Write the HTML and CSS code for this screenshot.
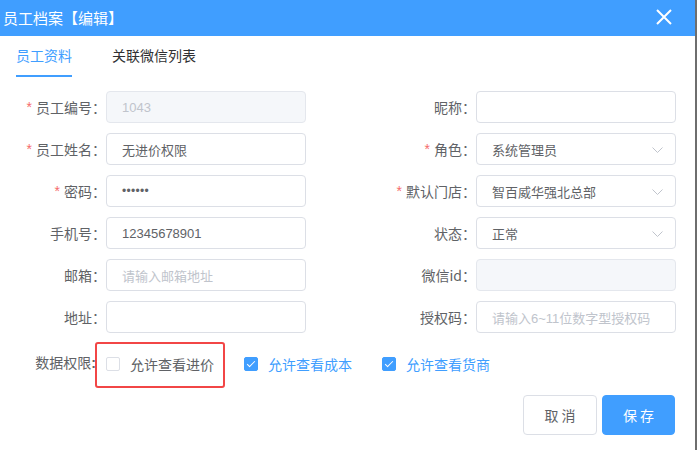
FILE: index.html
```html
<!DOCTYPE html>
<html lang="zh-CN">
<head>
<meta charset="utf-8">
<title>员工档案【编辑】</title>
<link rel="stylesheet" href="styles.css">
</head>
<body>
<div class="dialog">
  <div class="header">
    <span class="title">员工档案【编辑】</span>
    <svg class="close" width="16" height="16" viewBox="0 0 16 16"><path d="M1 1 L15 15 M15 1 L1 15" stroke="#fff" stroke-width="2" fill="none"/></svg>
  </div>
  <div class="tabs">
    <div class="tab active">员工资料</div>
    <div class="tab">关联微信列表</div>
  </div>
  <div class="form">
    <div class="label"><span class="req">*</span>员工编号：</div>
    <div class="input disabled">1043</div>
    <div class="label">昵称：</div>
    <div class="input"></div>

    <div class="label"><span class="req">*</span>员工姓名：</div>
    <div class="input">无进价权限</div>
    <div class="label"><span class="req">*</span>角色：</div>
    <div class="input select">系统管理员<svg class="arrow" width="11" height="6" viewBox="0 0 11 6"><path d="M0.5 0.5 L5.5 5.5 L10.5 0.5" stroke="#c0c4cc" stroke-width="1" fill="none"/></svg></div>

    <div class="label"><span class="req">*</span>密码：</div>
    <div class="input"><span class="dots">••••••</span></div>
    <div class="label"><span class="req">*</span>默认门店：</div>
    <div class="input select">智百威华强北总部<svg class="arrow" width="11" height="6" viewBox="0 0 11 6"><path d="M0.5 0.5 L5.5 5.5 L10.5 0.5" stroke="#c0c4cc" stroke-width="1" fill="none"/></svg></div>

    <div class="label">手机号：</div>
    <div class="input num">12345678901</div>
    <div class="label">状态：</div>
    <div class="input select">正常<svg class="arrow" width="11" height="6" viewBox="0 0 11 6"><path d="M0.5 0.5 L5.5 5.5 L10.5 0.5" stroke="#c0c4cc" stroke-width="1" fill="none"/></svg></div>

    <div class="label">邮箱：</div>
    <div class="input placeholder">请输入邮箱地址</div>
    <div class="label">微信id：</div>
    <div class="input disabled"></div>

    <div class="label">地址：</div>
    <div class="input"></div>
    <div class="label">授权码：</div>
    <div class="input placeholder">请输入6~11位数字型授权码</div>
  </div>
  <div class="perm-row">
    <div class="perm-label">数据权限<span class="colon">:</span></div>
    <div class="checks">
      <label class="check"><span class="box"></span><span class="ctext">允许查看进价</span></label>
      <label class="check checked"><span class="box"></span><span class="ctext">允许查看成本</span></label>
      <label class="check checked"><span class="box"></span><span class="ctext">允许查看货商</span></label>
    </div>
    <div class="highlight"></div>
  </div>
  <div class="footer">
    <button class="btn">取 消</button>
    <button class="btn primary">保 存</button>
  </div>
</div>
</body>
</html>
```

FILE: styles.css
```css
* { box-sizing: border-box; }
html, body { margin: 0; padding: 0; }
body {
  width: 697px;
  height: 450px;
  background: #fff;
  font-family: "Liberation Sans", "Noto Sans CJK SC", sans-serif;
  font-size: 14px;
  color: #606266;
  overflow: hidden;
}
.dialog {
  width: 697px;
  height: 450px;
  border-right: 2px solid #6e6e6e;
  background: #fff;
}
.header {
  height: 36px;
  background: #409eff;
  display: flex;
  align-items: center;
  justify-content: space-between;
  padding: 0 23px 0 3px;
}
.title {
  color: #fff;
  font-size: 15px;
  font-family: "Noto Sans CJK SC", sans-serif;
  line-height: 20px;
}
.close { display: block; margin-top: -3px; }
.tabs {
  height: 41px;
  display: flex;
  gap: 40px;
  padding-left: 16px;
}
.tab {
  height: 41px;
  line-height: 39px;
  font-size: 14px;
  font-family: "Noto Sans CJK SC", sans-serif;
  color: #303133;
  border-bottom: 2px solid transparent;
}
.tab.active {
  color: #409eff;
  border-bottom-color: #409eff;
}
.form {
  margin-top: 14px;
  display: grid;
  grid-template-columns: 106px 200px 170px 200px;
  grid-auto-rows: 32px;
  row-gap: 10px;
}
.label {
  display: flex;
  align-items: center;
  justify-content: flex-end;
  font-family: "Noto Sans CJK SC", sans-serif;
  font-size: 14px;
  color: #606266;
  white-space: nowrap;
}
.req {
  color: #f56c6c;
  margin-right: 4px;
  font-family: "Liberation Sans", sans-serif;
}
.input {
  position: relative;
  border: 1px solid #dcdfe6;
  border-radius: 4px;
  background: #fff;
  padding: 0 15px;
  display: flex;
  align-items: center;
  font-size: 13px;
  color: #606266;
  white-space: nowrap;
}
.input.disabled {
  background: #f5f7fa;
  border-color: #e4e7ed;
  color: #c0c4cc;
}
.input.placeholder { color: #c0c4cc; }
.dots { font-family: "Liberation Sans", sans-serif; font-size: 12px; letter-spacing: 0.3px; }
.arrow {
  position: absolute;
  right: 12px;
  top: 13px;
}
.perm-row {
  position: relative;
  margin-top: 15px;
  height: 32px;
  display: flex;
  align-items: center;
}
.perm-label {
  width: 106px;
  padding-right: 10px;
  text-align: right;
  font-family: "Noto Sans CJK SC", sans-serif;
  font-size: 14px;
  color: #606266;
  margin-top: -5px;
  white-space: nowrap;
}
.colon { font-family: "Liberation Sans", sans-serif; font-weight: bold; }
.checks { display: flex; gap: 30px; }
.check {
  display: flex;
  align-items: center;
  font-family: "Noto Sans CJK SC", sans-serif;
  font-size: 14px;
  color: #606266;
}
.box {
  position: relative;
  width: 14px;
  height: 14px;
  border: 1px solid #dcdfe6;
  border-radius: 2px;
  background: #fff;
}
.ctext { padding-left: 10px; line-height: 20px; }
.check.checked { color: #409eff; }
.check.checked .box {
  background: #409eff;
  border-color: #409eff;
}
.check.checked .box::after {
  content: "";
  position: absolute;
  left: 4px;
  top: 1px;
  width: 3px;
  height: 7px;
  border: 1px solid #fff;
  border-left: 0;
  border-top: 0;
  transform: rotate(45deg);
}
.highlight {
  position: absolute;
  left: 95px;
  top: -6px;
  width: 130px;
  height: 46px;
  border: 2px solid #f24646;
  border-radius: 3px;
}
.footer {
  margin-top: 15px;
  display: flex;
  justify-content: flex-end;
  gap: 5px;
  padding-right: 20px;
}
.btn {
  height: 40px;
  width: 74px;
  border: 1px solid #dcdfe6;
  border-radius: 4px;
  background: #fff;
  color: #606266;
  font-family: "Noto Sans CJK SC", sans-serif;
  font-size: 14px;
  padding: 0;
}
.btn.primary {
  width: 73px;
  background: #409eff;
  border-color: #409eff;
  color: #fff;
}
```
